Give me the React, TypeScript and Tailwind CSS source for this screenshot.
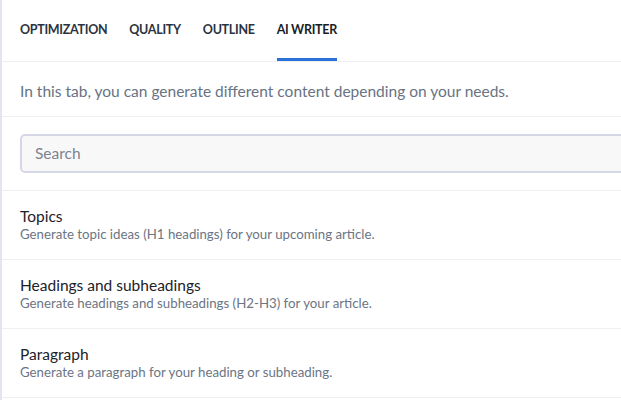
const tabs = ['OPTIMIZATION', 'QUALITY', 'OUTLINE', 'AI WRITER']

const items = [
  { title: 'Topics', desc: 'Generate topic ideas (H1 headings) for your upcoming article.' },
  { title: 'Headings and subheadings', desc: 'Generate headings and subheadings (H2-H3) for your article.' },
  { title: 'Paragraph', desc: 'Generate a paragraph for your heading or subheading.' },
]

export default function App() {
  return (
    <div className="h-[400px] w-[621px] overflow-hidden bg-white border-l-2 border-[#e4e4ef] font-['Lato','Noto_Sans',sans-serif]">
      {/* tabs */}
      <div className="flex h-[62px] gap-[22px] border-b border-[#eeeff2] pl-[18px]">
        {tabs.map((t) => (
          <div
            key={t}
            className={`flex items-center border-b-[3px] pt-[3px] text-[12.5px] font-bold tracking-[-0.3px] ${
              t === 'AI WRITER' ? 'border-[#2b6fd8] text-[#1a1d24]' : 'border-transparent text-[#2b3340]'
            }`}
          >
            {t}
          </div>
        ))}
      </div>

      <div className="flex h-[55px] items-center border-b border-[#eeeff2] pl-[18px] pt-[5px] text-[15.5px] text-[#687383]">
        In this tab, you can generate different content depending on your needs.
      </div>

      <div className="border-b border-[#eeeff2] pb-[17px] pl-[18px] pt-[17px]">
        <div className="flex h-[39px] w-[640px] items-center rounded-[5px] border-2 border-[#d6d7e6] bg-[#f8f8f9] pl-[13px] text-[15.5px] text-[#7b8390]">
          Search
        </div>
      </div>

      {items.map((it) => (
        <div key={it.title} className="flex h-[69px] flex-col justify-center border-b border-[#eeeff2] pl-[18px] pb-[1px]">
          <div className="text-[15.5px] leading-[20px] text-[#1d2129]">{it.title}</div>
          <div className="text-[13.25px] leading-[17px] text-[#6b7584]">{it.desc}</div>
        </div>
      ))}
    </div>
  )
}
